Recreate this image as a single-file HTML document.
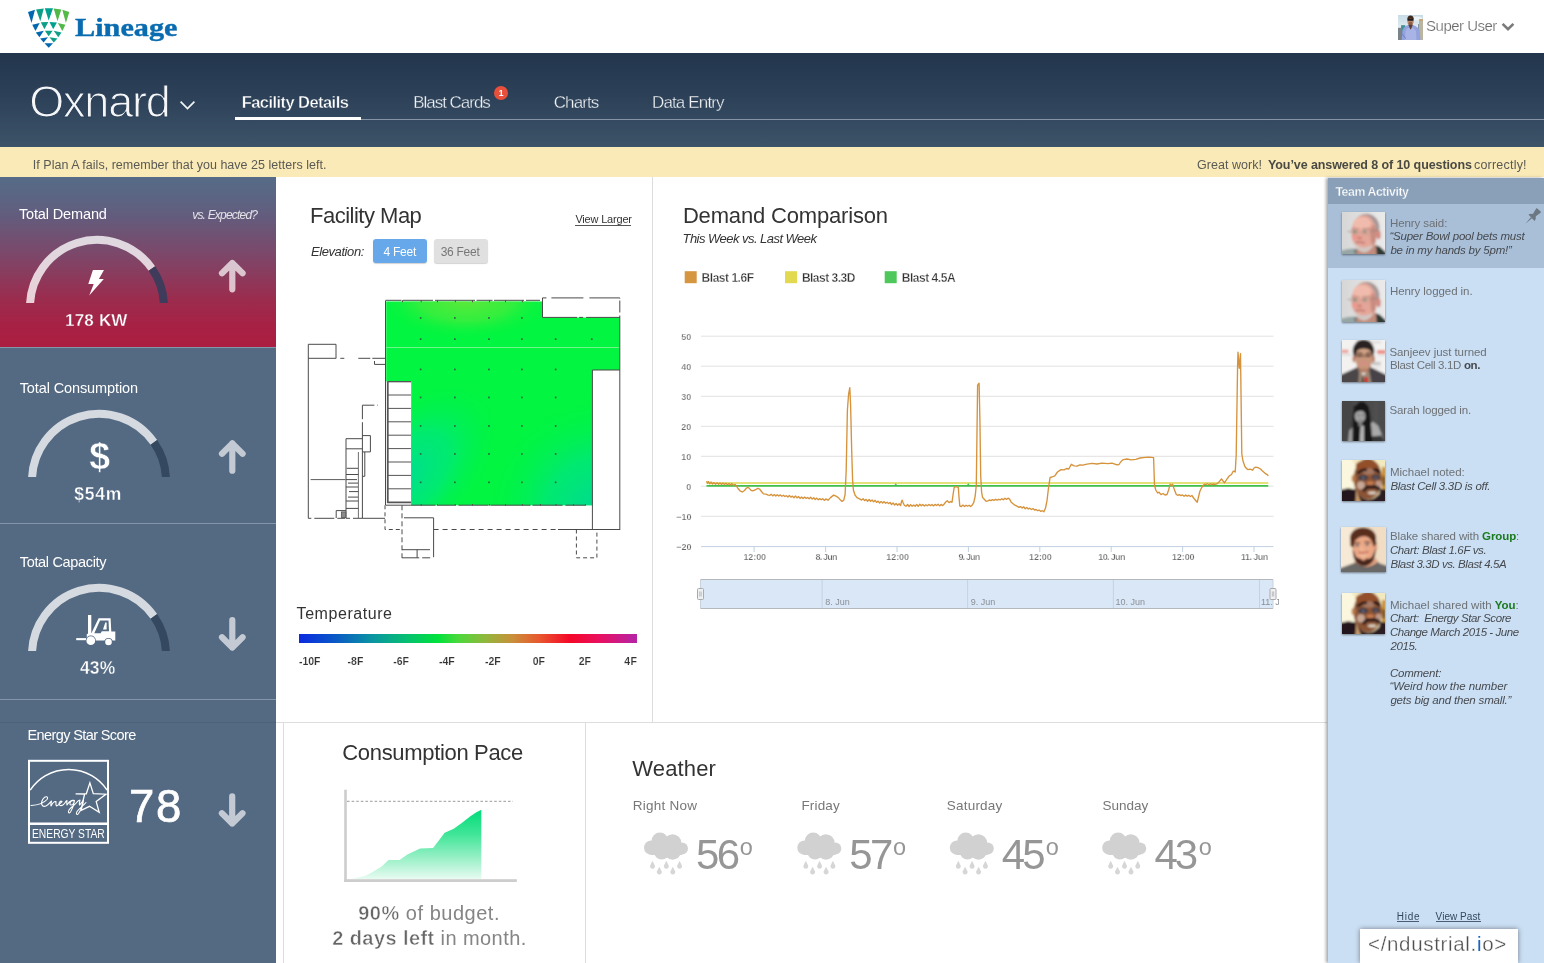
<!DOCTYPE html>
<html>
<head>
<meta charset="utf-8">
<title>Lineage - Oxnard Facility Details</title>
<style>
*{box-sizing:border-box;margin:0;padding:0}
html,body{width:1544px;height:963px;overflow:hidden;background:#fff}
body{font-family:"Liberation Sans",sans-serif;color:#333;position:relative}
.abs{position:absolute}
.t{position:absolute;white-space:pre;line-height:1}
svg{position:absolute;overflow:visible}
#root{position:absolute;left:0;top:0;width:1544px;height:963px;will-change:transform}

#nav{left:0;top:53px;width:1544px;height:94px;background:linear-gradient(#22354d 0%,#2c4158 45%,#3d5368 100%)}
#navline{left:235px;top:119px;width:1309px;height:1px;background:#8794a5}
#navsel{left:235px;top:117px;width:126px;height:3px;background:#fff}
#ybar{left:0;top:147px;width:1544px;height:30px;background:#faeab7}
#side{left:0;top:177px;width:276px;height:786px;background:#546a82}
#demand{left:0;top:177px;width:276px;height:170px;background:linear-gradient(#566b87 0%,#5b6583 12%,#645b7c 24%,#7f4567 48%,#9b2c4e 72%,#a72144 88%,#ab1d41 100%)}
.sline{left:0;width:276px;height:1px;background:#8396aa}
.vline{width:1px;background:#dddddd}
.hline{height:1px;background:#dddddd}
#team{left:1328px;top:178px;width:216px;height:785px;background:#cbdff4;box-shadow:-2px 0 3px rgba(0,0,0,.35)}
#teamh{left:1328px;top:178px;width:216px;height:26px;background:#8aa0b8}
#teamp{left:1328px;top:204px;width:216px;height:64px;background:#a9bfd8}
#badge{left:494px;top:86px;width:14px;height:14px;border-radius:7px;background:#e9503c}

.btn{position:absolute;top:239px;height:24px;border-radius:3px;box-shadow:0 1px 1px rgba(0,0,0,.18)}
#tbar{left:299px;top:634px;width:338px;height:9px;background:linear-gradient(90deg,#0b2be0 0%,#0a55c8 10%,#0a96a0 22%,#06c070 32%,#00e23c 41%,#4ad93c 47%,#90b83c 55%,#c8903a 63%,#e8582e 71%,#f50828 80%,#e81060 89%,#b424a8 100%)}

</style>
</head>
<body>
<div id="root">

<!-- p_10_layout -->

<div id="nav" class="abs"></div>
<div id="navline" class="abs"></div>
<div id="navsel" class="abs"></div>
<div id="ybar" class="abs"></div>
<div id="side" class="abs"></div>
<div id="demand" class="abs"></div>
<div class="abs sline" style="top:347px"></div>
<div class="abs sline" style="top:523px"></div>
<div class="abs sline" style="top:699px"></div>
<div class="abs" style="left:0;top:722px;width:276px;height:1px;background:#4d6279"></div>
<div class="abs vline" style="left:652px;top:177px;height:545px"></div>
<div class="abs hline" style="left:276px;top:722px;width:1051px"></div>
<div class="abs vline" style="left:283px;top:722px;height:241px"></div>
<div class="abs vline" style="left:585px;top:722px;height:241px"></div>
<div id="team" class="abs"></div>
<div id="teamh" class="abs"></div>
<div id="teamp" class="abs"></div>

<!-- logo -->
<svg style="left:0;top:0" width="200" height="53" viewBox="0 0 200 53">
 <g>
  <path fill="#0067b1" d="M28.0 11.9L35.0 9.8L31.5 23.0Z"/>
  <path fill="#0a9f86" d="M36.1 9.5L43.8 8.5L40.3 21.2Z"/>
  <path fill="#00a08f" d="M44.8 8.3L53.0 8.3L48.7 20.4Z"/>
  <path fill="#4fb848" d="M53.7 8.5L61.3 9.5L57.5 21.2Z"/>
  <path fill="#54b947" d="M62.3 9.8L69.3 11.9L65.9 23.0Z"/>
  <path fill="#0067b1" d="M32.2 24.8L39.7 22.9L35.5 31.0Z"/>
  <path fill="#0a9f86" d="M40.8 22.3L48.3 22.0L44.4 29.2Z"/>
  <path fill="#00a08f" d="M49.5 22.0L56.9 22.5L53.2 29.2Z"/>
  <path fill="#4fb848" d="M57.9 22.9L65.4 24.8L62.3 31.0Z"/>
  <path fill="#0067b1" d="M35.8 32.6L43.8 30.8L39.5 37.3Z"/>
  <path fill="#0a9f86" d="M44.9 30.8L52.6 30.8L48.7 36.3Z"/>
  <path fill="#10a08a" d="M53.7 30.8L61.5 32.6L58.3 37.3Z"/>
  <path fill="#0067b1" d="M40.1 38.6L48.0 37.3L43.6 42.4Z"/>
  <path fill="#0a9f8a" d="M49.5 37.3L57.5 38.6L53.7 42.4Z"/>
  <path fill="#0067b1" d="M44.5 43.3L53.0 43.3L48.7 47.8Z"/>
 </g>
</svg>
<!-- user avatar -->
<svg style="left:1398px;top:15px" width="25" height="25" viewBox="0 0 25 25">
 <defs><filter id="ub" x="-10%" y="-10%" width="120%" height="120%"><feGaussianBlur stdDeviation="0.55"/></filter><clipPath id="uc"><rect width="25" height="25"/></clipPath>
 <linearGradient id="usky" x1="0" y1="0" x2="0" y2="1"><stop offset="0" stop-color="#c3d9e6"/><stop offset=".55" stop-color="#e4edf0"/><stop offset="1" stop-color="#dfe6e6"/></linearGradient></defs>
 <g clip-path="url(#uc)"><g filter="url(#ub)">
  <rect x="-2" y="-2" width="29" height="29" fill="url(#usky)"/>
  <ellipse cx="19" cy="3.5" rx="5" ry="2" fill="#eef3f4"/>
  <rect x="-1" y="12.8" width="4" height="14" fill="#7b828a"/>
  <rect x="3.1" y="10.2" width="4.2" height="16" fill="#3f8e92"/>
  <rect x="20.2" y="9" width="1" height="17" fill="#6f7f92"/>
  <rect x="21" y="4.2" width="5" height="22" fill="#b9b5a0"/>
  <rect x="21.2" y="4.2" width="4" height="1.6" fill="#c9a274"/>
  <ellipse cx="12.5" cy="6.3" rx="3.1" ry="4" fill="#b98468"/>
  <path d="M9.2 4.6Q9.4 0.4 12.6 0.4Q15.8 0.6 15.9 4.6Q12.6 2.8 9.2 4.6Z" fill="#3f2a1c"/>
  <rect x="9.5" y="4.1" width="6" height="1.6" rx=".5" fill="#1b1b20"/>
  <ellipse cx="12.5" cy="8.2" rx="1.8" ry="1.4" fill="#8e5f4c"/>
  <path d="M3.6 26L4.4 15.5Q5.5 11.5 10 10L15 10Q20 11.5 21.6 15.5L22.6 26Z" fill="#93a1dc"/>
  <path d="M7 26L7.5 16Q9 12 12.5 13Q16 12 18 16L18.5 26Z" fill="#a9b4e6"/>
  <path d="M10.3 9.6L14.9 9.6L13 14.2L12.2 14.2Z" fill="#5c3a30"/>
  <path d="M4.4 19Q5.5 22 8 23.5" stroke="#6f7fc8" stroke-width="1" fill="none"/>
 </g></g>
</svg>
<!-- user chevron -->
<svg style="left:1501px;top:22px" width="14" height="10" viewBox="0 0 14 10"><path d="M1.6 1.8L7 7.2L12.4 1.8" fill="none" stroke="#7a7a7a" stroke-width="2.6"/></svg>
<!-- oxnard chevron -->
<svg style="left:179px;top:100px" width="17" height="11" viewBox="0 0 17 11"><path d="M1.6 1.7L8.5 8.6L15.4 1.7" fill="none" stroke="#f2f4f6" stroke-width="1.7"/></svg>
<div id="badge" class="abs"></div>

<div class="t" style="left:75.2px;top:15px;font-size:26px;color:#0a6cb0;font-weight:bold;font-family:'Liberation Serif',serif;-webkit-text-stroke:.4px #0a6cb0;transform:scaleX(1.163);transform-origin:0 0;">Lineage</div>
<div class="t" style="left:1426.1px;top:18px;font-size:15px;letter-spacing:-0.51px;color:#6a6a6a;-webkit-text-stroke:.2px #fff;">Super User</div>
<div class="t" style="left:29.2px;top:79px;font-size:45px;letter-spacing:-1.18px;color:#f4f6f8;-webkit-text-stroke:1.1px #2b3f57;">Oxnard</div>
<div class="t" style="left:241.7px;top:94px;font-size:16.5px;letter-spacing:-0.56px;color:#fff;font-weight:bold;-webkit-text-stroke:.4px #2d4159;">Facility Details</div>
<div class="t" style="left:413.2px;top:94px;font-size:17px;letter-spacing:-1.02px;color:#f0f2f5;-webkit-text-stroke:.3px #2e4259;">Blast Cards</div>
<div class="t" style="left:553.7px;top:94px;font-size:17px;letter-spacing:-0.88px;color:#f0f2f5;-webkit-text-stroke:.3px #2e4259;">Charts</div>
<div class="t" style="left:652.0px;top:94px;font-size:17px;letter-spacing:-0.86px;color:#f0f2f5;-webkit-text-stroke:.3px #2e4259;">Data Entry</div>
<div class="t" style="left:498.7px;top:89px;font-size:8.5px;color:#fff;font-weight:bold;">1</div>
<div class="t" style="left:32.8px;top:159px;font-size:12.5px;letter-spacing:0.02px;color:#5a5a55;">If Plan A fails, remember that you have 25 letters left.</div>
<div class="t" style="left:1197.1px;top:159px;font-size:12.5px;letter-spacing:0.02px;color:#5a5a55;">Great work!</div>
<div class="t" style="left:1268.0px;top:159px;font-size:12.5px;letter-spacing:-0.09px;color:#4a4a45;font-weight:bold;">You’ve answered 8 of 10 questions</div>
<div class="t" style="left:1474.0px;top:159px;font-size:12.5px;letter-spacing:0.21px;color:#5a5a55;">correctly!</div>

<!-- p_20_sidebar -->
<svg style="left:0;top:0" width="276" height="963" viewBox="0 0 276 963">
<defs></defs>
 <clipPath id="gc1"><rect x="0" y="216.89999999999998" width="276" height="86.10000000000002"/></clipPath>
 <g clip-path="url(#gc1)" fill="none" stroke-width="8.0">
  <path d="M30.0 314.9 L30.0 306.9 A67.0 67.0 0 0 1 151.88 268.47" stroke="rgba(255,255,255,.78)"/>
  <path d="M151.88 268.47 A67.0 67.0 0 0 1 164.0 306.9 L164.0 314.9" stroke="#3e3b5b"/>
 </g>
 <clipPath id="gc2"><rect x="0" y="390.8" width="276" height="86.19999999999999"/></clipPath>
 <g clip-path="url(#gc2)" fill="none" stroke-width="8.0">
  <path d="M32.0 488.8 L32.0 480.8 A67.0 67.0 0 0 1 153.88 442.37" stroke="#d5dae1"/>
  <path d="M153.88 442.37 A67.0 67.0 0 0 1 166.0 480.8 L166.0 488.8" stroke="#34495f"/>
 </g>
 <clipPath id="gc3"><rect x="0" y="564.8" width="276" height="86.20000000000005"/></clipPath>
 <g clip-path="url(#gc3)" fill="none" stroke-width="8.0">
  <path d="M32.0 662.8 L32.0 654.8 A67.0 67.0 0 0 1 153.88 616.37" stroke="#d5dae1"/>
  <path d="M153.88 616.37 A67.0 67.0 0 0 1 166.0 654.8 L166.0 662.8" stroke="#34495f"/>
 </g><path fill="#fff" d="M92.9 270.1L104 270.1L98.9 278.9L103.8 278.9L89.2 295.4L93.7 283.9L88.3 283.9Z"/><path d="M232.3 289.3 L232.3 263.0 M222.0 273.3 L232.3 263.0 L242.60000000000002 273.3" fill="none" stroke="rgba(255,255,255,.7)" stroke-width="6.2" stroke-linecap="round" stroke-linejoin="round"/><path d="M232.3 470.7 L232.3 443.4 M222.0 453.7 L232.3 443.4 L242.60000000000002 453.7" fill="none" stroke="#c3cad4" stroke-width="6.2" stroke-linecap="round" stroke-linejoin="round"/><path d="M232.3 620.2 L232.3 647.6 M222.0 637.3 L232.3 647.6 L242.60000000000002 637.3" fill="none" stroke="#c3cad4" stroke-width="6.2" stroke-linecap="round" stroke-linejoin="round"/><path d="M232.2 796.4 L232.2 823.5 M221.89999999999998 813.2 L232.2 823.5 L242.5 813.2" fill="none" stroke="#c3cad4" stroke-width="6.2" stroke-linecap="round" stroke-linejoin="round"/>
<g fill="#fff">
 <rect x="88" y="615" width="3.3" height="24"/>
 <rect x="76.2" y="638.1" width="10" height="2.1"/>
 <path d="M98.6 618.2L110.6 618.2L111.3 631.5L115.3 631.5L115.3 640.6L86.8 640.6L86.8 634L91.5 633Z M100 620.4L94.3 633.2L100.6 633.2L101.8 631.3L109 631.3L108.5 620.4Z"/>
 <path d="M105.3 622.5L106.6 622.5L106.6 629.5L103 629.5Z"/>
 <circle cx="90.8" cy="640.7" r="5.1" fill="#546a82"/>
 <circle cx="90.8" cy="640.7" r="4.4"/>
 <circle cx="108.5" cy="642" r="4.1" fill="#546a82"/>
 <circle cx="108.5" cy="642" r="3.3"/>
</g>
<g fill="none" stroke="#fff">
 <rect x="29" y="760.8" width="79" height="82" stroke-width="2"/>
 <path d="M28 823.7H109" stroke-width="2.4"/>
 <path d="M30.2 790.1A46.06 46.06 0 0 1 107.1 790.1" stroke-width="1.5"/>
 <path d="M89.9 782.9L93.3 793.6L105.9 794.2L96.2 801.6L99.2 812.4L89.5 806.3L81.2 810.3L82.6 802.5L84.6 794.2L75.6 793.8L86.3 793.8Z" stroke-width="1.3" stroke-linejoin="miter"/>
 <path d="M31 805.5C38 805 44 803 47 799.5C49 796.5 45.5 795.5 43 799C40 803.5 42 807.5 46 806C49 804.8 50 802 51.5 801C51 803 50.5 805 51 806C52.5 803 54 801 56 801.5C56 803.5 55.5 805 56.5 806C59 805.5 60.5 803 62 801.5C60.5 800.5 59 802 59 804C59.5 806.5 62.5 806 64.5 803.5C65.5 802 66 801 67 800.5C67 802 66.5 803.5 67 805C68.5 802.5 70 801 71.5 800.5 C74 800 75 801.5 73.5 803.5C72 805.5 69.5 805.5 70 803C70.5 801 73 800 74.5 800.5C74 804 72.5 809 70.5 812C69 814 67.5 812.5 69 810C71 807 75 805 77.5 801.5C78.5 800.5 79 800 80 800C79.5 802 79 804 79.5 805C81 803.5 82.5 801.5 83.5 800C83 804 81 810 78.5 813.5C77 815.5 75.5 814 77 811.5C79 808.5 83 806 86 802.5" stroke-width="1.1" stroke-linecap="round" stroke-linejoin="round"/>
</g></svg>
<div class="t" style="left:18.9px;top:207px;font-size:14.5px;letter-spacing:-0.13px;color:#fff;">Total Demand</div>
<div class="t" style="left:192.2px;top:209px;font-size:12px;letter-spacing:-0.80px;color:rgba(255,255,255,.82);font-style:italic;">vs. Expected?</div>
<div class="t" style="left:65.1px;top:312px;font-size:17px;letter-spacing:0.18px;color:#fff;font-weight:bold;-webkit-text-stroke:.35px #9a2c4d;">178 KW</div>
<div class="t" style="left:19.7px;top:381px;font-size:14.5px;letter-spacing:-0.11px;color:#fff;">Total Consumption</div>
<div class="t" style="left:89.3px;top:438px;font-size:37.5px;color:#fff;font-weight:bold;-webkit-text-stroke:.5px #546a82;">$</div>
<div class="t" style="left:74.2px;top:486px;font-size:17.5px;letter-spacing:0.77px;color:#fff;font-weight:bold;-webkit-text-stroke:.35px #546a82;">$54m</div>
<div class="t" style="left:19.8px;top:555px;font-size:14.5px;letter-spacing:-0.34px;color:#fff;">Total Capacity</div>
<div class="t" style="left:79.9px;top:660px;font-size:17.5px;letter-spacing:0.20px;color:#fff;font-weight:bold;-webkit-text-stroke:.35px #546a82;">43%</div>
<div class="t" style="left:27.5px;top:728px;font-size:14.5px;letter-spacing:-0.61px;color:#fff;">Energy Star Score</div>
<div class="t" style="left:129.1px;top:784px;font-size:45.5px;letter-spacing:1.50px;color:#fff;-webkit-text-stroke:.7px #fff;">78</div>
<div class="t" style="left:31.9px;top:827px;font-size:13px;color:#fff;transform:scaleX(0.791);transform-origin:0 0;">ENERGY STAR</div>

<!-- p_30_map -->

<svg style="left:276px;top:177px" width="377" height="545" viewBox="276 177 377 545">
 <defs>
  <radialGradient id="mg1" cx="466" cy="298" r="1" gradientUnits="userSpaceOnUse" gradientTransform="translate(466 298) scale(88 42) translate(-466 -298)">
   <stop offset="0" stop-color="#62e83a"/><stop offset=".55" stop-color="#3eed3d" stop-opacity=".8"/><stop offset="1" stop-color="#00f53f" stop-opacity="0"/>
  </radialGradient>
  <radialGradient id="mg2" cx="404" cy="478" r="1" gradientUnits="userSpaceOnUse" gradientTransform="translate(404 478) rotate(45) scale(70 125) translate(-404 -478)">
   <stop offset="0" stop-color="#00dd90"/><stop offset=".45" stop-color="#00e87a" stop-opacity=".8"/><stop offset="1" stop-color="#00f53f" stop-opacity="0"/>
  </radialGradient>
  <radialGradient id="mg3" cx="600" cy="512" r="120" gradientUnits="userSpaceOnUse">
   <stop offset="0" stop-color="#00d894"/><stop offset=".45" stop-color="#00e67c" stop-opacity=".8"/><stop offset="1" stop-color="#00f53f" stop-opacity="0"/>
  </radialGradient>
  <clipPath id="mclip"><path d="M386.2 301.5H542.6V317.6H619.6V370H592.4V505.2H411.2V381.6H386.2Z"/></clipPath>
 </defs>
 <g clip-path="url(#mclip)">
  <rect x="385" y="300" width="236" height="206" fill="#02f540"/>
  <rect x="385" y="300" width="236" height="206" fill="url(#mg2)"/>
  <rect x="385" y="300" width="236" height="206" fill="url(#mg3)"/>
  <rect x="385" y="300" width="236" height="206" fill="url(#mg1)"/>
  <rect x="385" y="347.2" width="236" height=".7" fill="#c8f5c8" opacity=".8"/>
  <rect x="419.8" y="317.1" width="1.7" height="1.7" fill="#2f6a3c"/><rect x="454.0" y="317.1" width="1.7" height="1.7" fill="#2f6a3c"/><rect x="488.1" y="317.1" width="1.7" height="1.7" fill="#2f6a3c"/><rect x="521.0" y="317.1" width="1.7" height="1.7" fill="#2f6a3c"/><rect x="419.8" y="338.3" width="1.7" height="1.7" fill="#2f6a3c"/><rect x="454.0" y="338.3" width="1.7" height="1.7" fill="#2f6a3c"/><rect x="488.1" y="338.3" width="1.7" height="1.7" fill="#2f6a3c"/><rect x="521.0" y="338.3" width="1.7" height="1.7" fill="#2f6a3c"/><rect x="554.8" y="338.3" width="1.7" height="1.7" fill="#2f6a3c"/><rect x="590.9" y="338.3" width="1.7" height="1.7" fill="#2f6a3c"/><rect x="419.8" y="368.6" width="1.7" height="1.7" fill="#2f6a3c"/><rect x="454.0" y="368.6" width="1.7" height="1.7" fill="#2f6a3c"/><rect x="488.1" y="368.6" width="1.7" height="1.7" fill="#2f6a3c"/><rect x="521.0" y="368.6" width="1.7" height="1.7" fill="#2f6a3c"/><rect x="554.8" y="368.6" width="1.7" height="1.7" fill="#2f6a3c"/><rect x="419.8" y="396.6" width="1.7" height="1.7" fill="#2f6a3c"/><rect x="454.0" y="396.6" width="1.7" height="1.7" fill="#2f6a3c"/><rect x="488.1" y="396.6" width="1.7" height="1.7" fill="#2f6a3c"/><rect x="521.0" y="396.6" width="1.7" height="1.7" fill="#2f6a3c"/><rect x="554.8" y="396.6" width="1.7" height="1.7" fill="#2f6a3c"/><rect x="419.8" y="425.1" width="1.7" height="1.7" fill="#2f6a3c"/><rect x="454.0" y="425.1" width="1.7" height="1.7" fill="#2f6a3c"/><rect x="488.1" y="425.1" width="1.7" height="1.7" fill="#2f6a3c"/><rect x="521.0" y="425.1" width="1.7" height="1.7" fill="#2f6a3c"/><rect x="554.8" y="425.1" width="1.7" height="1.7" fill="#2f6a3c"/><rect x="419.8" y="453.1" width="1.7" height="1.7" fill="#2f6a3c"/><rect x="454.0" y="453.1" width="1.7" height="1.7" fill="#2f6a3c"/><rect x="488.1" y="453.1" width="1.7" height="1.7" fill="#2f6a3c"/><rect x="521.0" y="453.1" width="1.7" height="1.7" fill="#2f6a3c"/><rect x="554.8" y="453.1" width="1.7" height="1.7" fill="#2f6a3c"/><rect x="419.8" y="481.5" width="1.7" height="1.7" fill="#2f6a3c"/><rect x="454.0" y="481.5" width="1.7" height="1.7" fill="#2f6a3c"/><rect x="488.1" y="481.5" width="1.7" height="1.7" fill="#2f6a3c"/><rect x="521.0" y="481.5" width="1.7" height="1.7" fill="#2f6a3c"/><rect x="554.8" y="481.5" width="1.7" height="1.7" fill="#2f6a3c"/>
 </g>
 <rect x="402.0" y="300.2" width="1" height="2" fill="#555"/><rect x="420.7" y="300.2" width="1" height="2" fill="#555"/><rect x="437.0" y="300.2" width="1" height="2" fill="#555"/><rect x="454.9" y="300.2" width="1" height="2" fill="#555"/><rect x="472.0" y="300.2" width="1" height="2" fill="#555"/><rect x="489.0" y="300.2" width="1" height="2" fill="#555"/><rect x="505.0" y="300.2" width="1" height="2" fill="#555"/><rect x="521.9" y="300.2" width="1" height="2" fill="#555"/><rect x="420.7" y="504" width="1" height="1.6" fill="#555"/><rect x="437.0" y="504" width="1" height="1.6" fill="#555"/><rect x="454.9" y="504" width="1" height="1.6" fill="#555"/><rect x="472.0" y="504" width="1" height="1.6" fill="#555"/><rect x="489.0" y="504" width="1" height="1.6" fill="#555"/><rect x="505.0" y="504" width="1" height="1.6" fill="#555"/><rect x="521.9" y="504" width="1" height="1.6" fill="#555"/><rect x="540.0" y="504" width="1" height="1.6" fill="#555"/><rect x="555.6" y="504" width="1" height="1.6" fill="#555"/><rect x="573.0" y="504" width="1" height="1.6" fill="#555"/><rect x="585.0" y="504" width="1" height="1.6" fill="#555"/>
 <g fill="none" stroke="#4a4a4a" stroke-width="1">
  <!-- main walls -->
  <path d="M385.5 300.3H540" stroke-dasharray="16 1.5 30 2 40 1.5"/>
  <path d="M385.5 300.6V505"/>
  <path d="M387.4 381.6V503"/>
  <path d="M542.5 301V297.9H619.8V530" stroke-dasharray="7 5 32 6 31 2 12 3 400"/>
  <path d="M542.5 300V317.4H620" stroke-dasharray="52 2 4 3 100"/>
  <path d="M592.4 530V370H620"/>
  <path d="M385.5 505.2H592"  stroke-dasharray="50 2 18 3 30 2 40 2 30 3 20"/>
  <!-- docks -->
  <g stroke="#555"><path d="M388 381.6H411"/><path d="M388 395.0H411"/><path d="M388 408.4H411"/><path d="M388 421.8H411"/><path d="M388 435.2H411"/><path d="M388 448.6H411"/><path d="M388 462.0H411"/><path d="M388 475.4H411"/><path d="M388 488.8H411"/><path d="M388 502.2H411"/><path d="M411 381.6H388V502.5H411" stroke-width="1.3"/></g>
  <!-- left building -->
  <path d="M308.3 518.3V344.3H336V358"/>
  <path d="M308.3 358.3H385" stroke-dasharray="28 4 4 14 12 2 100"/>
  <path d="M374.5 361V364.4H385"/>
  <path d="M362.4 405.2H378" stroke-dasharray="12 3 2"/>
  <path d="M362.4 405.2V518" stroke-dasharray="14 3 100"/>
  <path d="M364.8 452V476.3H362.4"/>
  <path d="M346 438.7H362.4M362.4 435.6H370.4V451.9H362.4M346 448.8H362.4M346 438.7V518"/>
  <path d="M358.4 452V518" stroke-width=".8"/>
  <path d="M346.7 468.3H358M346 474.5H358.4M346 479.6H357M348 483.1H358M346 487H358M349 491.6H358.4M348 497.1H358M346 501H358.4M346 508.4H358.4" stroke-width="1"/>
  <path d="M310.6 479.6H345.5" stroke-width=".9"/>
  <path d="M336.2 518V510.6H346"/>
  <path d="M308.3 518.3H346" stroke-dasharray="3 3 20 3 8 2"/>
  <path d="M346 518.3H385"  stroke-dasharray="4 3 100"/>
  <!-- bottom structures -->
  <path d="M385 505.3V529.5H402" stroke-dasharray="4 3"/>
  <path d="M402 505.3V558" stroke-dasharray="5 3"/>
  <path d="M404 517.8H433.6V557.8H402"  stroke-dasharray="69 4 8 3 100"/>
  <path d="M402 549.7H430M417.1 549.7V557.8"/>
  <path d="M433.6 529.5H560" stroke-dasharray="5 4"/>
  <path d="M558 529.5H620"/>
  <path d="M576.4 529.5V557.8H596.9V529.5" stroke-dasharray="4 3"/>
 </g>
 <rect x="341.3" y="511.9" width="4.6" height="5.6" fill="#8a8a8a" stroke="#444" stroke-width=".7"/>
</svg>
<div class="btn" style="left:373px;width:54px;background:#66a8e9"></div>
<div class="btn" style="left:434px;width:54px;background:#e0e0e0"></div>
<div id="tbar" class="abs"></div>
<div class="abs" style="left:575px;top:224.6px;width:56px;height:1px;background:#555"></div>

<div class="t" style="left:310.0px;top:205px;font-size:22px;letter-spacing:-0.50px;color:#333;">Facility Map</div>
<div class="t" style="left:575.4px;top:214px;font-size:11px;letter-spacing:-0.19px;color:#333;">View Larger</div>
<div class="t" style="left:310.9px;top:245px;font-size:13px;letter-spacing:-0.40px;color:#333;font-style:italic;">Elevation:</div>
<div class="t" style="left:383.5px;top:246px;font-size:12px;letter-spacing:-0.26px;color:#fff;">4 Feet</div>
<div class="t" style="left:440.7px;top:246px;font-size:12px;letter-spacing:-0.27px;color:#777;">36 Feet</div>
<div class="t" style="left:296.6px;top:606px;font-size:16px;letter-spacing:0.56px;color:#333;">Temperature</div>
<div class="t" style="left:299.1px;top:656px;font-size:10.5px;letter-spacing:-0.10px;color:#333;font-weight:bold;-webkit-text-stroke:.15px #fff;">-10F</div>
<div class="t" style="left:347.6px;top:656px;font-size:10.5px;color:#333;font-weight:bold;-webkit-text-stroke:.15px #fff;">-8F</div>
<div class="t" style="left:393.2px;top:656px;font-size:10.5px;letter-spacing:-0.05px;color:#333;font-weight:bold;-webkit-text-stroke:.15px #fff;">-6F</div>
<div class="t" style="left:438.9px;top:656px;font-size:10.5px;color:#333;font-weight:bold;-webkit-text-stroke:.15px #fff;">-4F</div>
<div class="t" style="left:485.0px;top:656px;font-size:10.5px;letter-spacing:-0.05px;color:#333;font-weight:bold;-webkit-text-stroke:.15px #fff;">-2F</div>
<div class="t" style="left:532.7px;top:656px;font-size:10.5px;color:#333;font-weight:bold;-webkit-text-stroke:.15px #fff;">0F</div>
<div class="t" style="left:578.7px;top:656px;font-size:10.5px;color:#333;font-weight:bold;-webkit-text-stroke:.15px #fff;">2F</div>
<div class="t" style="left:624.3px;top:656px;font-size:10.5px;letter-spacing:0.40px;color:#333;font-weight:bold;-webkit-text-stroke:.15px #fff;">4F</div>

<!-- p_40_chart -->

<svg style="left:653px;top:177px" width="675" height="545" viewBox="653 177 675 545">
 <rect x="684.7" y="271.2" width="12" height="12" fill="#d6953f"/>
 <rect x="785" y="271.2" width="12" height="12" fill="#e2d950"/>
 <rect x="884.7" y="271.2" width="12" height="12" fill="#4ec85b"/>
 <g stroke="#e2e2e2" stroke-width="1" fill="none"><path d="M701 336.2H1273.5"/><path d="M701 366.2H1273.5"/><path d="M701 396.3H1273.5"/><path d="M701 426.3H1273.5"/><path d="M701 456.3H1273.5"/><path d="M701 486.2H1273.5"/><path d="M701 516.3H1273.5"/></g>
 <g stroke="#c0d0e0" stroke-width="1" fill="none"><path d="M701 546.6H1273.5"/><path d="M754.1 546.6V552"/><path d="M825.6 546.6V552"/><path d="M897.0 546.6V552"/><path d="M968.4 546.6V552"/><path d="M1039.8 546.6V552"/><path d="M1111.2 546.6V552"/><path d="M1182.6 546.6V552"/><path d="M1254.0 546.6V552"/></g>
 <path d="M706.5 483H1268.3" stroke="#dcd94c" stroke-width="1.3" fill="none"/>
 <path d="M706.5 485.9H1268.3" stroke="#3fc04b" stroke-width="1.7" fill="none"/>
 <path d="M894.5 485L895.8 483.2L897 485Z M967 485L968.3 483.2L969.6 485Z" fill="#3fc04b"/>
 <path d="M706.5 481.1 L707.5 483.2 L708.5 481.6 L709.8 483.8 L711.0 482.0 L712.5 484.0 L714.0 482.6 L715.5 484.2 L717.0 482.8 L718.5 484.3 L720.0 482.9 L721.5 484.5 L723.0 483.0 L724.5 484.6 L726.0 483.2 L727.5 484.8 L729.0 483.5 L730.5 485.0 L732.0 483.6 L733.5 485.2 L735.4 484.5 L738.0 488.5 L740.0 490.8 L742.3 492.0 L744.5 490.5 L746.5 488.0 L747.9 487.3 L749.5 488.6 L751.0 490.3 L752.6 490.8 L755.0 490.0 L757.9 488.3 L759.5 489.0 L761.5 491.5 L763.5 493.9 L766.0 494.2 L768.2 495.1 L769.7 495.4 L771.2 494.3 L772.7 495.9 L774.3 494.6 L775.8 496.1 L777.3 494.7 L778.8 496.0 L780.3 494.9 L781.8 496.2 L783.4 495.2 L784.9 496.5 L786.4 495.7 L787.9 497.0 L789.4 495.5 L790.9 497.1 L792.5 496.1 L794.0 497.7 L795.5 495.9 L797.0 497.9 L798.5 496.5 L800.0 498.4 L801.5 497.0 L803.1 498.6 L804.6 497.1 L806.1 498.4 L807.6 497.5 L809.1 498.8 L810.6 497.3 L812.2 499.0 L813.7 497.7 L815.2 499.5 L816.7 498.1 L818.2 499.7 L819.7 498.6 L821.3 499.7 L822.8 498.8 L824.3 500.4 L825.8 498.9 L828.0 500.2 L830.5 497.6 L833.6 495.1 L836.0 496.2 L838.3 497.6 L840.5 500.0 L842.0 501.4 L843.8 500.2 L845.1 494.5 L846.2 470.0 L847.4 410.0 L848.6 394.0 L849.8 387.6 L850.6 405.0 L851.7 450.9 L852.6 480.0 L853.4 490.0 L855.0 495.0 L857.0 497.6 L860.1 499.2 L861.6 500.1 L863.1 498.8 L864.6 500.6 L866.1 499.4 L867.6 501.2 L869.1 499.5 L870.6 501.3 L872.1 500.0 L873.6 501.9 L875.1 500.3 L876.6 502.4 L878.1 501.1 L879.6 503.0 L881.1 501.6 L882.6 503.0 L884.1 501.6 L885.6 503.3 L887.1 502.2 L888.6 503.6 L890.1 502.5 L891.6 504.5 L893.1 502.9 L894.6 505.0 L896.1 503.5 L897.6 505.3 L899.1 503.8 L900.6 505.6 L901.4 502.0 L902.2 500.1 L903.2 503.0 L904.5 505.5 L906.0 506.2 L907.6 504.5 L909.1 506.5 L910.6 504.6 L912.1 506.2 L913.7 504.9 L915.2 506.2 L916.7 504.4 L918.2 506.4 L919.8 504.2 L921.3 505.8 L922.8 504.5 L924.4 506.0 L925.9 504.7 L927.4 505.8 L928.9 504.5 L930.5 505.6 L932.0 504.5 L933.5 505.9 L935.0 504.4 L936.6 505.5 L938.1 504.2 L939.6 505.9 L941.1 504.4 L942.7 505.6 L944.2 504.0 L945.8 502.0 L947.3 500.7 L949.0 502.6 L950.5 501.5 L952.0 502.3 L953.0 495.0 L954.2 487.3 L956.0 486.6 L958.3 487.3 L959.0 497.0 L959.8 506.0 L961.4 506.5 L962.9 505.1 L964.5 506.5 L966.0 505.3 L967.6 506.3 L969.2 505.3 L970.7 506.5 L972.3 505.0 L973.8 502.3 L975.2 496.0 L976.3 485.2 L976.9 440.0 L977.6 385.4 L978.3 384.2 L979.1 383.3 L979.9 420.0 L980.7 475.8 L981.6 492.0 L982.6 497.6 L984.5 499.5 L986.2 501.4 L987.8 500.8 L989.3 500.0 L990.9 500.6 L992.4 499.7 L994.0 500.4 L995.6 499.3 L997.1 500.1 L998.7 499.3 L1000.2 499.9 L1001.8 498.8 L1003.4 499.7 L1004.9 498.3 L1006.5 499.4 L1008.0 498.2 L1009.6 499.1 L1011.2 502.3 L1014.0 504.6 L1017.4 506.4 L1019.0 507.4 L1020.5 506.6 L1022.1 508.1 L1023.6 506.8 L1025.2 508.7 L1026.8 507.4 L1028.3 509.0 L1029.9 508.2 L1031.4 509.5 L1033.0 508.6 L1034.5 510.0 L1036.1 509.5 L1037.7 510.7 L1039.2 510.1 L1040.8 511.4 L1042.3 510.7 L1043.9 511.8 L1045.5 508.0 L1047.0 500.7 L1048.5 488.0 L1050.1 477.4 L1052.0 477.0 L1054.8 475.8 L1057.5 472.0 L1061.0 469.6 L1064.0 469.8 L1066.5 468.5 L1068.8 469.0 L1071.3 464.3 L1074.0 465.8 L1077.0 466.2 L1080.0 464.8 L1082.8 465.2 L1087.0 464.2 L1092.0 463.4 L1096.9 464.0 L1102.0 463.2 L1108.0 463.6 L1112.0 463.2 L1117.1 464.9 L1119.0 464.5 L1121.0 461.5 L1123.3 459.6 L1127.0 459.0 L1131.0 459.8 L1135.8 459.3 L1140.0 458.0 L1145.2 457.4 L1149.0 457.2 L1153.6 457.7 L1154.0 470.0 L1154.5 485.2 L1155.8 490.0 L1157.6 493.0 L1159.0 492.2 L1161.0 494.6 L1163.0 493.5 L1165.0 495.0 L1167.0 494.5 L1168.6 490.0 L1170.1 484.2 L1171.3 485.5 L1172.6 484.2 L1174.5 490.0 L1176.3 494.5 L1177.9 495.4 L1179.4 494.6 L1181.0 495.7 L1182.5 494.9 L1184.1 496.3 L1185.7 494.9 L1187.2 496.2 L1188.8 495.3 L1190.3 496.5 L1191.9 495.5 L1194.0 498.5 L1197.2 502.3 L1198.5 497.0 L1199.8 491.5 L1201.3 488.3 L1203.0 485.5 L1204.4 484.2 L1206.0 484.4 L1207.5 483.7 L1209.0 484.7 L1210.6 483.9 L1212.2 484.5 L1213.7 484.0 L1215.2 484.4 L1216.8 483.9 L1219.0 482.0 L1221.5 478.9 L1223.0 481.0 L1224.6 482.7 L1227.0 479.0 L1229.3 475.8 L1231.5 474.5 L1233.0 471.5 L1234.0 471.1 L1235.2 472.0 L1236.2 455.0 L1237.1 397.9 L1237.6 365.0 L1238.0 352.1 L1238.7 362.0 L1239.3 368.3 L1239.9 360.0 L1240.5 353.7 L1241.1 400.0 L1241.8 454.0 L1243.0 461.0 L1244.9 466.5 L1246.5 468.5 L1248.0 469.6 L1250.0 469.2 L1252.7 470.2 L1254.0 468.0 L1255.8 467.1 L1258.0 467.6 L1260.5 469.0 L1262.5 471.0 L1265.1 473.3 L1266.8 474.3 L1268.3 475.8" stroke="#d6933c" stroke-width="1.35" fill="none" stroke-linejoin="round"/>
 <!-- navigator -->
 <rect x="700.5" y="579.5" width="572.5" height="29" fill="#d9e7f7"/>
 <path d="M700.5 579.5H1273M700.5 608.5H1273" stroke="#b4b8bd" stroke-width="1" fill="none"/>
 <path d="M700.5 579.5V608.5M1273 579.5V608.5" stroke="#c9d2dc" stroke-width="1" fill="none"/>
 <path d="M822.1 580V608M967.6 580V608M1113.4 580V608M1259.5 580V608" stroke="#c4d2e2" stroke-width="1" fill="none"/>
 <g fill="#eef1f4" stroke="#a9a9a9" stroke-width="1">
  <rect x="697.5" y="588.5" width="6" height="11" rx="1"/>
  <rect x="1270" y="588.5" width="6" height="11" rx="1"/>
 </g>
 <path d="M699.8 591.5V596.5M701.2 591.5V596.5M1272.3 591.5V596.5M1273.7 591.5V596.5" stroke="#999" stroke-width=".6" fill="none"/>
</svg>

<div class="t" style="left:682.9px;top:205px;font-size:22px;letter-spacing:-0.17px;color:#333;">Demand Comparison</div>
<div class="t" style="left:682.5px;top:232px;font-size:13px;letter-spacing:-0.53px;color:#333;font-style:italic;">This Week vs. Last Week</div>
<div class="t" style="left:701.6px;top:272px;font-size:12px;letter-spacing:-0.48px;color:#333;font-weight:bold;-webkit-text-stroke:.3px #fff;">Blast 1.6F</div>
<div class="t" style="left:801.9px;top:272px;font-size:12px;letter-spacing:-0.51px;color:#333;font-weight:bold;-webkit-text-stroke:.3px #fff;">Blast 3.3D</div>
<div class="t" style="left:901.7px;top:272px;font-size:12px;letter-spacing:-0.46px;color:#333;font-weight:bold;-webkit-text-stroke:.3px #fff;">Blast 4.5A</div>
<div class="t" style="left:681.2px;top:333px;font-size:9px;color:#666;font-weight:bold;-webkit-text-stroke:.25px #fff;">50</div>
<div class="t" style="left:681.2px;top:363px;font-size:9px;color:#666;font-weight:bold;-webkit-text-stroke:.25px #fff;">40</div>
<div class="t" style="left:681.2px;top:393px;font-size:9px;color:#666;font-weight:bold;-webkit-text-stroke:.25px #fff;">30</div>
<div class="t" style="left:681.2px;top:423px;font-size:9px;color:#666;font-weight:bold;-webkit-text-stroke:.25px #fff;">20</div>
<div class="t" style="left:681.2px;top:453px;font-size:9px;color:#666;font-weight:bold;-webkit-text-stroke:.25px #fff;">10</div>
<div class="t" style="left:686.2px;top:483px;font-size:9px;color:#666;font-weight:bold;-webkit-text-stroke:.25px #fff;">0</div>
<div class="t" style="left:676.2px;top:513px;font-size:9px;color:#666;font-weight:bold;-webkit-text-stroke:.25px #fff;">−10</div>
<div class="t" style="left:676.2px;top:543px;font-size:9px;color:#666;font-weight:bold;-webkit-text-stroke:.25px #fff;">−20</div>
<div class="t" style="left:743.4px;top:553px;font-size:9px;letter-spacing:-0.08px;color:#666;font-weight:bold;-webkit-text-stroke:.25px #fff;">12:00</div>
<div class="t" style="left:815.6px;top:553px;font-size:9px;letter-spacing:-0.84px;color:#666;font-weight:bold;-webkit-text-stroke:.25px #fff;">8. Jun</div>
<div class="t" style="left:886.3px;top:553px;font-size:9px;letter-spacing:-0.08px;color:#666;font-weight:bold;-webkit-text-stroke:.25px #fff;">12:00</div>
<div class="t" style="left:958.4px;top:553px;font-size:9px;letter-spacing:-0.84px;color:#666;font-weight:bold;-webkit-text-stroke:.25px #fff;">9. Jun</div>
<div class="t" style="left:1029.1px;top:553px;font-size:9px;letter-spacing:-0.08px;color:#666;font-weight:bold;-webkit-text-stroke:.25px #fff;">12:00</div>
<div class="t" style="left:1098.3px;top:553px;font-size:9px;letter-spacing:-0.65px;color:#666;font-weight:bold;-webkit-text-stroke:.25px #fff;">10. Jun</div>
<div class="t" style="left:1171.9px;top:553px;font-size:9px;letter-spacing:-0.08px;color:#666;font-weight:bold;-webkit-text-stroke:.25px #fff;">12:00</div>
<div class="t" style="left:1241.1px;top:553px;font-size:9px;letter-spacing:-0.57px;color:#666;font-weight:bold;-webkit-text-stroke:.25px #fff;">11. Jun</div>
<div class="t" style="left:825.2px;top:598px;font-size:9px;color:#8a8f96;">8. Jun</div>
<div class="t" style="left:970.8px;top:598px;font-size:9px;color:#8a8f96;">9. Jun</div>
<div class="t" style="left:1115.5px;top:598px;font-size:9px;color:#8a8f96;">10. Jun</div>
<div class="t" style="left:1261.0px;top:598px;font-size:9px;color:#8a8f96;width:18px;overflow:hidden;">11. J</div>

<!-- p_50_bottom -->

<svg style="left:284px;top:723px" width="1043" height="240" viewBox="284 723 1043 240">
 <defs>
  <linearGradient id="cpg" x1="0" y1="809" x2="0" y2="880" gradientUnits="userSpaceOnUse">
   <stop offset="0" stop-color="#00dc78"/><stop offset=".35" stop-color="#3fe597"/><stop offset=".75" stop-color="#a8f2cf"/><stop offset="1" stop-color="#ecfcf4"/>
  </linearGradient>
 </defs>
 <path d="M350.7 879.0 L358.0 877.6 L364.8 876.0 L372.6 872.1 L381.6 866.4 L388.5 860.0 L399.6 860.0 L407.3 854.6 L420.2 848.4 L433.1 847.9 L444.7 832.7 L453.7 828.8 L461.4 823.2 L470.4 816.2 L476.0 812.6 L481.3 809.8 L481.3 879.0Z" fill="url(#cpg)"/>
 <path d="M347 801.3H513" stroke="#9a9a9a" stroke-width="1" stroke-dasharray="2.6 2" fill="none"/>
 <rect x="344.2" y="789.7" width="2.6" height="92.3" fill="#cdcdcd"/>
 <rect x="344.2" y="879.2" width="172.6" height="2.8" fill="#cdcdcd"/>
 <g transform="translate(0.0 0)" fill="#d1d1d1"><circle cx="651.3" cy="847.7" r="7.3"/><circle cx="659.9" cy="840.9" r="8.3"/><circle cx="672.6" cy="842.9" r="8.7"/><circle cx="682.0" cy="848.6" r="6.0"/><circle cx="661.7" cy="851.9" r="7.6"/><circle cx="672.6" cy="851.5" r="8.3"/><rect x="651" y="843" width="31" height="12"/><path fill="#d6d6d6" d="M652.5 860.8L654.8 865.4A2.45 2.45 0 1 1 650.2 865.4Z"/><path fill="#d6d6d6" d="M666.3 860.8L668.6 865.4A2.45 2.45 0 1 1 664.0 865.4Z"/><path fill="#d6d6d6" d="M679.6 860.8L681.9 865.4A2.45 2.45 0 1 1 677.3 865.4Z"/><path fill="#d6d6d6" d="M659.3 866.7L661.6 871.3A2.45 2.45 0 1 1 657.0 871.3Z"/><path fill="#d6d6d6" d="M672.8 866.7L675.1 871.3A2.45 2.45 0 1 1 670.5 871.3Z"/></g><g transform="translate(153.3 0)" fill="#d1d1d1"><circle cx="651.3" cy="847.7" r="7.3"/><circle cx="659.9" cy="840.9" r="8.3"/><circle cx="672.6" cy="842.9" r="8.7"/><circle cx="682.0" cy="848.6" r="6.0"/><circle cx="661.7" cy="851.9" r="7.6"/><circle cx="672.6" cy="851.5" r="8.3"/><rect x="651" y="843" width="31" height="12"/><path fill="#d6d6d6" d="M652.5 860.8L654.8 865.4A2.45 2.45 0 1 1 650.2 865.4Z"/><path fill="#d6d6d6" d="M666.3 860.8L668.6 865.4A2.45 2.45 0 1 1 664.0 865.4Z"/><path fill="#d6d6d6" d="M679.6 860.8L681.9 865.4A2.45 2.45 0 1 1 677.3 865.4Z"/><path fill="#d6d6d6" d="M659.3 866.7L661.6 871.3A2.45 2.45 0 1 1 657.0 871.3Z"/><path fill="#d6d6d6" d="M672.8 866.7L675.1 871.3A2.45 2.45 0 1 1 670.5 871.3Z"/></g><g transform="translate(305.8 0)" fill="#d1d1d1"><circle cx="651.3" cy="847.7" r="7.3"/><circle cx="659.9" cy="840.9" r="8.3"/><circle cx="672.6" cy="842.9" r="8.7"/><circle cx="682.0" cy="848.6" r="6.0"/><circle cx="661.7" cy="851.9" r="7.6"/><circle cx="672.6" cy="851.5" r="8.3"/><rect x="651" y="843" width="31" height="12"/><path fill="#d6d6d6" d="M652.5 860.8L654.8 865.4A2.45 2.45 0 1 1 650.2 865.4Z"/><path fill="#d6d6d6" d="M666.3 860.8L668.6 865.4A2.45 2.45 0 1 1 664.0 865.4Z"/><path fill="#d6d6d6" d="M679.6 860.8L681.9 865.4A2.45 2.45 0 1 1 677.3 865.4Z"/><path fill="#d6d6d6" d="M659.3 866.7L661.6 871.3A2.45 2.45 0 1 1 657.0 871.3Z"/><path fill="#d6d6d6" d="M672.8 866.7L675.1 871.3A2.45 2.45 0 1 1 670.5 871.3Z"/></g><g transform="translate(458.2 0)" fill="#d1d1d1"><circle cx="651.3" cy="847.7" r="7.3"/><circle cx="659.9" cy="840.9" r="8.3"/><circle cx="672.6" cy="842.9" r="8.7"/><circle cx="682.0" cy="848.6" r="6.0"/><circle cx="661.7" cy="851.9" r="7.6"/><circle cx="672.6" cy="851.5" r="8.3"/><rect x="651" y="843" width="31" height="12"/><path fill="#d6d6d6" d="M652.5 860.8L654.8 865.4A2.45 2.45 0 1 1 650.2 865.4Z"/><path fill="#d6d6d6" d="M666.3 860.8L668.6 865.4A2.45 2.45 0 1 1 664.0 865.4Z"/><path fill="#d6d6d6" d="M679.6 860.8L681.9 865.4A2.45 2.45 0 1 1 677.3 865.4Z"/><path fill="#d6d6d6" d="M659.3 866.7L661.6 871.3A2.45 2.45 0 1 1 657.0 871.3Z"/><path fill="#d6d6d6" d="M672.8 866.7L675.1 871.3A2.45 2.45 0 1 1 670.5 871.3Z"/></g>
</svg>

<div class="t" style="left:342.3px;top:742px;font-size:22px;letter-spacing:-0.33px;color:#333;">Consumption Pace</div>
<div class="t" style="left:358.2px;top:903px;font-size:20px;letter-spacing:0.52px;color:#858585;"><span style="font-weight:bold;color:#666;-webkit-text-stroke:.5px #fff;">90%</span> of budget.</div>
<div class="t" style="left:332.2px;top:928px;font-size:20px;letter-spacing:0.42px;color:#858585;"><span style="font-weight:bold;color:#666;-webkit-text-stroke:.5px #fff;">2 days left</span> in month.</div>
<div class="t" style="left:632.3px;top:758px;font-size:22px;letter-spacing:0.15px;color:#333;">Weather</div>
<div class="t" style="left:632.8px;top:799px;font-size:13.5px;letter-spacing:0.23px;color:#777;">Right Now</div>
<div class="t" style="left:801.4px;top:799px;font-size:13.5px;letter-spacing:0.18px;color:#777;">Friday</div>
<div class="t" style="left:946.7px;top:799px;font-size:13.5px;letter-spacing:0.23px;color:#777;">Saturday</div>
<div class="t" style="left:1102.4px;top:799px;font-size:13.5px;letter-spacing:0.02px;color:#777;">Sunday</div>
<div class="t" style="left:696.0px;top:834px;font-size:42px;letter-spacing:-2.70px;color:#969696;">56</div>
<div class="t" style="left:849.3px;top:834px;font-size:42px;letter-spacing:-2.70px;color:#969696;">57</div>
<div class="t" style="left:1001.7px;top:834px;font-size:42px;letter-spacing:-2.80px;color:#969696;">45</div>
<div class="t" style="left:1154.6px;top:834px;font-size:42px;letter-spacing:-3.30px;color:#969696;">43</div>
<div class="t" style="left:739.7px;top:836px;font-size:23.5px;color:#969696;">o</div>
<div class="t" style="left:893.1px;top:836px;font-size:23.5px;color:#969696;">o</div>
<div class="t" style="left:1045.7px;top:836px;font-size:23.5px;color:#969696;">o</div>
<div class="t" style="left:1198.7px;top:836px;font-size:23.5px;color:#969696;">o</div>

<!-- p_60_team -->

<svg width="0" height="0" style="left:0;top:0"><defs><filter id="avb" x="-10%" y="-10%" width="120%" height="120%"><feGaussianBlur stdDeviation="2"/></filter><linearGradient id="hbg" x1="0" x2="1" y1="0" y2="0"><stop offset="0" stop-color="#d5d5d5"/><stop offset="1" stop-color="#ececec"/></linearGradient></defs></svg>

<svg style="left:1342px;top:212px;box-shadow:0 1px 2px rgba(0,0,0,.45)" width="43" height="42" viewBox="0 0 100 100" preserveAspectRatio="none">
 <clipPath id="avc1"><rect width="100" height="100"/></clipPath>
 <g clip-path="url(#avc1)"><g filter="url(#avb)">
<rect x="-10" y="-10" width="120" height="120" fill="url(#hbg)"/>
<path d="M-5 105L-5 93L14 88L30 87L36 105Z" fill="#96a6a4"/>
<path d="M27 89L36 87L40 105L31 105Z" fill="#71817e"/>
<path d="M74 105L79 79L88 83L105 99L105 105Z" fill="#2e3935"/>
<path d="M33 105L36 84L79 78L81 105Z" fill="#c18c7b"/>
<ellipse cx="57" cy="37" rx="30" ry="33" fill="#a79797"/>
<ellipse cx="85" cy="54" rx="5" ry="11" fill="#d4897f"/>
<ellipse cx="51" cy="51" rx="29" ry="43" fill="#e4a698"/>
<ellipse cx="47" cy="27" rx="21" ry="15" fill="#f0bbac"/>
<ellipse cx="73" cy="55" rx="7" ry="24" fill="#c98c80"/>
<path d="M24 66Q30 92 52 97Q72 92 79 64L74 78Q62 88 50 86Q36 84 30 74Z" fill="#d8ccc8"/>
<path d="M36 80Q50 90 66 80L62 92Q50 98 40 92Z" fill="#d2c6c2"/>
<ellipse cx="30" cy="60" rx="7" ry="8" fill="#ea9a90"/>
<path d="M21 41L40 39M47 39L66 40" stroke="#b8867c" stroke-width="2.2" fill="none"/>
<ellipse cx="30" cy="47.5" rx="4.5" ry="2.6" fill="#4f8a70"/>
<ellipse cx="53" cy="47" rx="4.5" ry="2.6" fill="#4f8a70"/>
<ellipse cx="30" cy="48.5" rx="9" ry="6" fill="none" stroke="#a8968e" stroke-width="1.1"/>
<ellipse cx="55" cy="47.5" rx="10" ry="6" fill="none" stroke="#a8968e" stroke-width="1.1"/>
<path d="M13 46L22 47M64 46L84 43" stroke="#8a7a72" stroke-width="1.5" fill="none"/>
<ellipse cx="41" cy="62" rx="6" ry="4" fill="#d3867a"/>
<path d="M31 73Q42 70 53 74" stroke="#b56660" stroke-width="3" fill="none"/>
</g></g>
</svg>
<svg style="left:1342px;top:280px;box-shadow:0 1px 2px rgba(0,0,0,.45)" width="43" height="42" viewBox="0 0 100 100" preserveAspectRatio="none">
 <clipPath id="avc2"><rect width="100" height="100"/></clipPath>
 <g clip-path="url(#avc2)"><g filter="url(#avb)">
<rect x="-10" y="-10" width="120" height="120" fill="url(#hbg)"/>
<path d="M-5 105L-5 93L14 88L30 87L36 105Z" fill="#96a6a4"/>
<path d="M27 89L36 87L40 105L31 105Z" fill="#71817e"/>
<path d="M74 105L79 79L88 83L105 99L105 105Z" fill="#2e3935"/>
<path d="M33 105L36 84L79 78L81 105Z" fill="#c18c7b"/>
<ellipse cx="57" cy="37" rx="30" ry="33" fill="#a79797"/>
<ellipse cx="85" cy="54" rx="5" ry="11" fill="#d4897f"/>
<ellipse cx="51" cy="51" rx="29" ry="43" fill="#e4a698"/>
<ellipse cx="47" cy="27" rx="21" ry="15" fill="#f0bbac"/>
<ellipse cx="73" cy="55" rx="7" ry="24" fill="#c98c80"/>
<path d="M24 66Q30 92 52 97Q72 92 79 64L74 78Q62 88 50 86Q36 84 30 74Z" fill="#d8ccc8"/>
<path d="M36 80Q50 90 66 80L62 92Q50 98 40 92Z" fill="#d2c6c2"/>
<ellipse cx="30" cy="60" rx="7" ry="8" fill="#ea9a90"/>
<path d="M21 41L40 39M47 39L66 40" stroke="#b8867c" stroke-width="2.2" fill="none"/>
<ellipse cx="30" cy="47.5" rx="4.5" ry="2.6" fill="#4f8a70"/>
<ellipse cx="53" cy="47" rx="4.5" ry="2.6" fill="#4f8a70"/>
<ellipse cx="30" cy="48.5" rx="9" ry="6" fill="none" stroke="#a8968e" stroke-width="1.1"/>
<ellipse cx="55" cy="47.5" rx="10" ry="6" fill="none" stroke="#a8968e" stroke-width="1.1"/>
<path d="M13 46L22 47M64 46L84 43" stroke="#8a7a72" stroke-width="1.5" fill="none"/>
<ellipse cx="41" cy="62" rx="6" ry="4" fill="#d3867a"/>
<path d="M31 73Q42 70 53 74" stroke="#b56660" stroke-width="3" fill="none"/>
</g></g>
</svg>
<svg style="left:1342px;top:340px;box-shadow:0 1px 2px rgba(0,0,0,.45)" width="43" height="42" viewBox="0 0 100 100" preserveAspectRatio="none">
 <clipPath id="avc3"><rect width="100" height="100"/></clipPath>
 <g clip-path="url(#avc3)"><g filter="url(#avb)">
<rect x="-10" y="-10" width="120" height="120" fill="#f3f2f1"/>
<rect x="-2" y="23" width="17" height="8" fill="#e9a49c"/>
<rect x="82" y="24" width="20" height="9" fill="#ea8c84"/>
<rect x="-2" y="34" width="24" height="2.5" fill="#cfcaca"/>
<rect x="84" y="36" width="18" height="2" fill="#d8d2d2"/>
<rect x="70" y="52" width="20" height="8" fill="#c9c5c5"/>
<rect x="76" y="64" width="14" height="2" fill="#d6d2d2"/>
<rect x="62" y="3" width="28" height="5" fill="#dcd8d8"/>
<path d="M-5 105L-5 84L30 67L36 64L50 105Z" fill="#4b474a"/>
<path d="M50 105L66 64L72 67L105 84L105 105Z" fill="#474346"/>
<path d="M38 105L40 72L50 84L63 72L69 105Z" fill="#9d8776"/>
<path d="M44 105L46 86L52 92L50 105Z" fill="#5a5048"/>
<path d="M52 105L53 88L60 88L61 105Z" fill="#cc352b"/>
<ellipse cx="50" cy="26" rx="25" ry="27" fill="#2a2422"/>
<ellipse cx="28" cy="45" rx="3.6" ry="8" fill="#b98067"/>
<ellipse cx="73" cy="45" rx="3.6" ry="8" fill="#b98067"/>
<ellipse cx="51" cy="44" rx="20" ry="30" fill="#c9967c"/>
<ellipse cx="50" cy="25" rx="15" ry="9" fill="#d3a386"/>
<path d="M35 60Q51 88 67 60L63 73Q51 82 39 73Z" fill="#8e614e"/>
<rect x="44" y="68" width="15" height="10" fill="#b78368"/>
<path d="M34 33Q42 30 48 33M55 33Q62 30 68 33" stroke="#33221c" stroke-width="3" fill="none"/>
<path d="M33 38H68" stroke="#7a5a4e" stroke-width="3.4" fill="none"/>
<ellipse cx="41" cy="38.5" rx="4" ry="2" fill="#3a2a26"/>
<ellipse cx="61" cy="38.5" rx="4" ry="2" fill="#3a2a26"/>
<ellipse cx="50" cy="56" rx="9" ry="3.8" fill="#d78c88"/>
<path d="M30 18Q50 0 72 18L70 28Q50 12 32 28Z" fill="#2a2422"/>
</g></g>
</svg>
<svg style="left:1342px;top:401px;box-shadow:0 1px 2px rgba(0,0,0,.45)" width="43" height="40" viewBox="0 0 100 100" preserveAspectRatio="none">
 <clipPath id="avc4"><rect width="100" height="100"/></clipPath>
 <g clip-path="url(#avc4)"><g filter="url(#avb)">
<rect x="-10" y="-10" width="120" height="120" fill="#4b4b4b"/>
<rect x="-2" y="-2" width="26" height="104" fill="#444"/>
<rect x="74" y="-2" width="10" height="104" fill="#505050"/>
<path d="M14 105L17 74L28 62L30 105Z" fill="#a2a2a2"/>
<path d="M60 105L61 60L72 52L84 62L95 90L95 105Z" fill="#a9a9a9"/>
<path d="M64 105L66 89L93 86L97 105Z" fill="#353535"/>
<path d="M24 105L25 40Q27 5 46 1Q65 5 66 40L71 105Z" fill="#151515"/>
<path d="M41 105L43 62L51 62L51 105Z" fill="#b4b4b4"/>
<ellipse cx="42" cy="38" rx="12.5" ry="16" fill="#a1a1a1"/>
<path d="M27 32Q44 17 60 32L61 12L27 12Z" fill="#121212"/>
<path d="M36 36H41M46 36H51" stroke="#3a3a3a" stroke-width="2" fill="none"/>
<path d="M39 47H47" stroke="#6a6a6a" stroke-width="2" fill="none"/>
<rect x="38" y="51" width="9" height="12" fill="#7e7e7e"/>
</g></g>
</svg>
<svg style="left:1342px;top:460px;box-shadow:0 1px 2px rgba(0,0,0,.45)" width="43" height="41" viewBox="0 0 100 100" preserveAspectRatio="none">
 <clipPath id="avc5"><rect width="100" height="100"/></clipPath>
 <g clip-path="url(#avc5)"><g filter="url(#avb)">
<rect x="-10" y="-10" width="120" height="120" fill="#f3e9bf"/>
<ellipse cx="8" cy="40" rx="26" ry="50" fill="#fbf7de"/>
<rect x="93" y="17" width="9" height="55" fill="#c88e2b"/>
<rect x="94" y="40" width="8" height="22" fill="#7c5622"/>
<path d="M-5 105L-5 73L14 69L32 72L40 105Z" fill="#21151f"/>
<path d="M86 105L88 70L105 72L105 105Z" fill="#2a1a24"/>
<ellipse cx="60" cy="46" rx="33" ry="50" fill="#8b5434"/>
<ellipse cx="27" cy="45" rx="4.5" ry="9" fill="#b97a48"/>
<ellipse cx="57" cy="14" rx="25" ry="14" fill="#934f2a"/>
<ellipse cx="62" cy="28" rx="14" ry="8" fill="#a47862"/>
<ellipse cx="44" cy="62" rx="9" ry="10" fill="#c7a796"/>
<ellipse cx="85" cy="60" rx="7" ry="10" fill="#bf9a88"/>
<path d="M33 76Q60 118 92 76L90 105L38 105Z" fill="#291a20"/>
<path d="M36 33Q46 22 58 24" stroke="#1c1116" stroke-width="6.5" fill="none"/>
<path d="M73 24Q83 22 88 32" stroke="#1c1116" stroke-width="6.5" fill="none"/>
<ellipse cx="49" cy="43" rx="11" ry="6.5" fill="#3e3a48"/>
<ellipse cx="49" cy="44" rx="4.5" ry="2.4" fill="#66707e"/>
<ellipse cx="79" cy="42" rx="9" ry="6" fill="#3e3a48"/>
<ellipse cx="79" cy="43" rx="4" ry="2.2" fill="#66707e"/>
<ellipse cx="66" cy="57" rx="8" ry="5" fill="#c87b50"/>
<path d="M49 76Q58 62 67 66Q78 62 88 72" stroke="#20141a" stroke-width="7.5" fill="none"/>
<ellipse cx="70" cy="80" rx="10" ry="4" fill="#ddd0c2"/>
<path d="M31 105L33 74L45 105Z" fill="#c99b6b"/>
</g></g>
</svg>
<svg style="left:1341px;top:527px;box-shadow:0 1px 2px rgba(0,0,0,.45)" width="45" height="45" viewBox="0 0 100 100" preserveAspectRatio="none">
 <clipPath id="avc6"><rect width="100" height="100"/></clipPath>
 <g clip-path="url(#avc6)"><g filter="url(#avb)">
<rect x="-10" y="-10" width="120" height="120" fill="#f0ddc4"/>
<rect x="-2" y="-2" width="30" height="104" fill="#f6e9d6"/>
<path d="M-5 105L-5 93L32 79L52 90L80 79L105 87L105 105Z" fill="#6b6968"/>
<path d="M30 80L34 70L78 70L83 79Q56 100 30 80Z" fill="#dfa181"/>
<path d="M30 80Q56 102 84 79" stroke="#515a5e" stroke-width="3" fill="none"/>
<ellipse cx="49" cy="25" rx="29" ry="24" fill="#5a2e1f"/>
<ellipse cx="76" cy="45" rx="4.5" ry="9" fill="#dc9a7a"/>
<ellipse cx="50" cy="50" rx="24.5" ry="33" fill="#eaa886"/>
<path d="M26 50Q27 88 54 87Q77 83 77 48L71 62Q67 72 57 70L50 75L42 70Q32 70 30 58Z" fill="#4a281e"/>
<path d="M21 42Q18 12 48 2Q76 4 79 38L72 44Q70 26 57 21Q41 18 31 31L28 46Z" fill="#5a2e1f"/>
<ellipse cx="49" cy="63" rx="8" ry="5.5" fill="#efb797"/>
<path d="M39 56Q50 60 61 54" stroke="#c4665a" stroke-width="3.2" fill="none"/>
<path d="M30 36Q36 33 42 36M52 34Q59 31 65 35" stroke="#4a281e" stroke-width="2.4" fill="none"/>
<ellipse cx="36" cy="41" rx="4" ry="2.4" fill="#4f6070"/>
<ellipse cx="58" cy="39" rx="4" ry="2.4" fill="#4f6070"/>
<ellipse cx="46" cy="49" rx="4" ry="5" fill="#f0b696"/>
</g></g>
</svg>
<svg style="left:1342px;top:593px;box-shadow:0 1px 2px rgba(0,0,0,.45)" width="43" height="41" viewBox="0 0 100 100" preserveAspectRatio="none">
 <clipPath id="avc7"><rect width="100" height="100"/></clipPath>
 <g clip-path="url(#avc7)"><g filter="url(#avb)">
<rect x="-10" y="-10" width="120" height="120" fill="#f3e9bf"/>
<ellipse cx="8" cy="40" rx="26" ry="50" fill="#fbf7de"/>
<rect x="93" y="17" width="9" height="55" fill="#c88e2b"/>
<rect x="94" y="40" width="8" height="22" fill="#7c5622"/>
<path d="M-5 105L-5 73L14 69L32 72L40 105Z" fill="#21151f"/>
<path d="M86 105L88 70L105 72L105 105Z" fill="#2a1a24"/>
<ellipse cx="60" cy="46" rx="33" ry="50" fill="#8b5434"/>
<ellipse cx="27" cy="45" rx="4.5" ry="9" fill="#b97a48"/>
<ellipse cx="57" cy="14" rx="25" ry="14" fill="#934f2a"/>
<ellipse cx="62" cy="28" rx="14" ry="8" fill="#a47862"/>
<ellipse cx="44" cy="62" rx="9" ry="10" fill="#c7a796"/>
<ellipse cx="85" cy="60" rx="7" ry="10" fill="#bf9a88"/>
<path d="M33 76Q60 118 92 76L90 105L38 105Z" fill="#291a20"/>
<path d="M36 33Q46 22 58 24" stroke="#1c1116" stroke-width="6.5" fill="none"/>
<path d="M73 24Q83 22 88 32" stroke="#1c1116" stroke-width="6.5" fill="none"/>
<ellipse cx="49" cy="43" rx="11" ry="6.5" fill="#3e3a48"/>
<ellipse cx="49" cy="44" rx="4.5" ry="2.4" fill="#66707e"/>
<ellipse cx="79" cy="42" rx="9" ry="6" fill="#3e3a48"/>
<ellipse cx="79" cy="43" rx="4" ry="2.2" fill="#66707e"/>
<ellipse cx="66" cy="57" rx="8" ry="5" fill="#c87b50"/>
<path d="M49 76Q58 62 67 66Q78 62 88 72" stroke="#20141a" stroke-width="7.5" fill="none"/>
<ellipse cx="70" cy="80" rx="10" ry="4" fill="#ddd0c2"/>
<path d="M31 105L33 74L45 105Z" fill="#c99b6b"/>
</g></g>
</svg>
<svg style="left:1520px;top:204px" width="24" height="24" viewBox="1520 204 24 24">
 <path d="M1525.4 223.7L1530.9 217.2L1532 218.2Z" fill="#6b7783"/>
 <path d="M1528.4 214.5Q1530.6 213.2 1532.8 213.9L1536.2 208.5Q1536.6 207.9 1537.3 208.4L1540.7 211.6Q1541.1 212.2 1540.6 212.7L1535.8 216.3Q1536.2 218.6 1534.6 220.9Z" fill="#6b7783"/>
</svg>
<div class="abs" style="left:1397px;top:921px;width:22px;height:1px;background:#4b5d73"></div>
<div class="abs" style="left:1435.5px;top:921px;width:45px;height:1px;background:#4b5d73"></div>
<div class="abs" style="left:1360px;top:929px;width:158px;height:34px;background:#fff;box-shadow:0 0 5px rgba(0,0,0,.45)"></div>

<div class="t" style="left:1335.4px;top:186px;font-size:12.3px;letter-spacing:-0.42px;color:#fff;font-weight:bold;-webkit-text-stroke:.3px #8aa0b8;">Team Activity</div>
<div class="t" style="left:1389.9px;top:218px;font-size:11.5px;letter-spacing:-0.07px;color:#6d7175;">Henry said:</div>
<div class="t" style="left:1389.4px;top:231px;font-size:11.5px;letter-spacing:-0.21px;color:#464a4f;font-style:italic;">“Super Bowl pool bets must</div>
<div class="t" style="left:1390.4px;top:245px;font-size:11.5px;letter-spacing:-0.20px;color:#464a4f;font-style:italic;">be in my hands by 5pm!”</div>
<div class="t" style="left:1389.9px;top:286px;font-size:11.5px;letter-spacing:-0.07px;color:#6d7175;">Henry logged in.</div>
<div class="t" style="left:1389.4px;top:347px;font-size:11.5px;letter-spacing:-0.06px;color:#6d7175;">Sanjeev just turned</div>
<div class="t" style="left:1389.9px;top:360px;font-size:11.5px;letter-spacing:-0.33px;color:#6d7175;">Blast Cell 3.1D <span style="font-weight:bold;color:#464a4f;">on.</span></div>
<div class="t" style="left:1389.4px;top:405px;font-size:11.5px;letter-spacing:-0.13px;color:#6d7175;">Sarah logged in.</div>
<div class="t" style="left:1389.9px;top:467px;font-size:11.5px;letter-spacing:0.01px;color:#6d7175;">Michael noted:</div>
<div class="t" style="left:1390.4px;top:481px;font-size:11.5px;letter-spacing:-0.30px;color:#464a4f;font-style:italic;">Blast Cell 3.3D is off.</div>
<div class="t" style="left:1389.9px;top:531px;font-size:11.5px;letter-spacing:-0.10px;color:#6d7175;">Blake shared with <span style="font-weight:bold;color:#1b7a1e;">Group</span>:</div>
<div class="t" style="left:1389.9px;top:545px;font-size:11.5px;letter-spacing:-0.36px;color:#464a4f;font-style:italic;">Chart: Blast 1.6F vs.</div>
<div class="t" style="left:1390.4px;top:559px;font-size:11.5px;letter-spacing:-0.43px;color:#464a4f;font-style:italic;">Blast 3.3D vs. Blast 4.5A</div>
<div class="t" style="left:1389.9px;top:600px;font-size:11.5px;color:#6d7175;">Michael shared with <span style="font-weight:bold;color:#1b7a1e;">You</span>:</div>
<div class="t" style="left:1389.9px;top:613px;font-size:11.5px;letter-spacing:-0.42px;color:#464a4f;font-style:italic;">Chart: &nbsp;Energy Star Score</div>
<div class="t" style="left:1389.9px;top:627px;font-size:11.5px;letter-spacing:-0.44px;color:#464a4f;font-style:italic;">Change March 2015 - June</div>
<div class="t" style="left:1390.4px;top:641px;font-size:11.5px;letter-spacing:-0.35px;color:#464a4f;font-style:italic;">2015.</div>
<div class="t" style="left:1389.9px;top:668px;font-size:11.5px;letter-spacing:-0.23px;color:#464a4f;font-style:italic;">Comment:</div>
<div class="t" style="left:1389.4px;top:681px;font-size:11.5px;letter-spacing:-0.07px;color:#464a4f;font-style:italic;">“Weird how the number</div>
<div class="t" style="left:1390.4px;top:695px;font-size:11.5px;letter-spacing:-0.18px;color:#464a4f;font-style:italic;">gets big and then small.”</div>
<div class="t" style="left:1396.8px;top:912px;font-size:10px;letter-spacing:0.70px;color:#34475e;">Hide</div>
<div class="t" style="left:1435.6px;top:912px;font-size:10px;letter-spacing:0.05px;color:#34475e;">View Past</div>
<div class="t" style="left:1368.0px;top:934px;font-size:20.5px;letter-spacing:0.67px;color:#4f4f4f;-webkit-text-stroke:.3px #fff;">&lt;/ndustrial.<span style="color:#1766c2;-webkit-text-stroke:0;">i</span>o&gt;</div>

</div>
</body>
</html>
